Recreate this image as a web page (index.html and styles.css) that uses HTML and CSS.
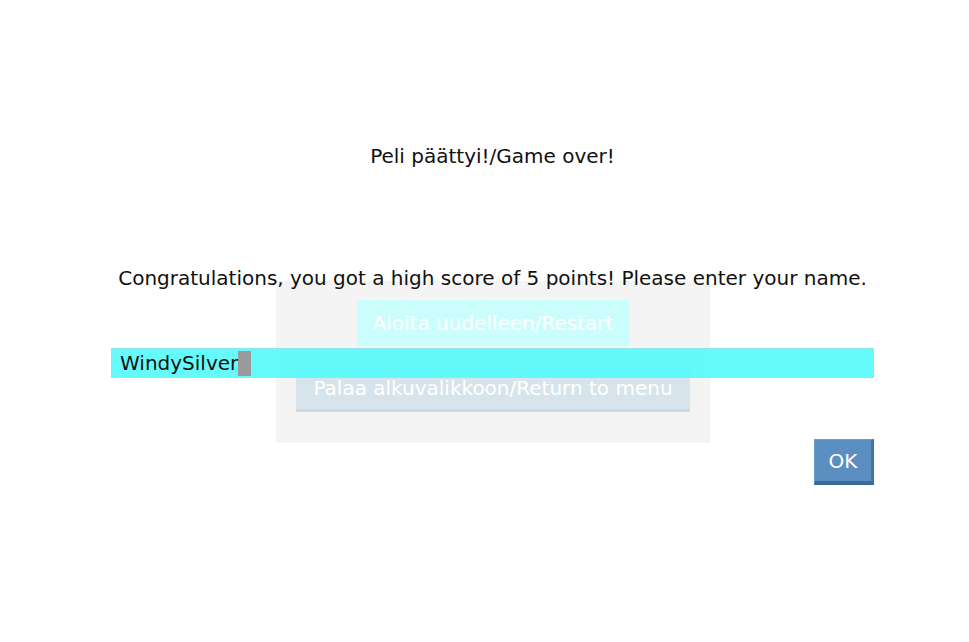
FILE: index.html
```html
<!DOCTYPE html>
<html lang="fi">
<head>
<meta charset="utf-8">
<title>Peli päättyi</title>
<link rel="stylesheet" href="styles.css">
</head>
<body>
<div class="stage">
  <div class="menu-panel">
    <button class="menu-btn restart">Aloita uudelleen/Restart</button>
    <button class="menu-btn back">Palaa alkuvalikkoon/Return to menu</button>
  </div>
  <div class="dialog">
    <h1 class="title">Peli päättyi!/Game over!</h1>
    <p class="message">Congratulations, you got a high score of 5 points! Please enter your name.</p>
    <div class="name-field"><span class="name-text">WindySilver</span><span class="caret"></span></div>
    <div class="actions"><button class="ok-btn">OK</button></div>
  </div>
</div>
</body>
</html>
```

FILE: styles.css
```css
html, body {
  margin: 0;
  padding: 0;
  background: #ffffff;
  font-family: "DejaVu Sans", "Liberation Sans", sans-serif;
}
.stage {
  position: relative;
  width: 969px;
  height: 642px;
  overflow: hidden;
}
.menu-panel {
  position: absolute;
  left: 276px;
  top: 281px;
  width: 434px;
  height: 162px;
  box-sizing: border-box;
  background: #f4f4f4;
  display: flex;
  flex-direction: column;
  align-items: center;
  padding-top: 19px;
  gap: 21px;
}
.menu-btn {
  border: none;
  color: #ffffff;
  font-family: inherit;
  font-size: 20px;
  padding: 0;
  margin: 0;
}
.restart {
  width: 272px;
  height: 46px;
  background: #ccfdfd;
}
.back {
  width: 394px;
  height: 45px;
  background: #d8e4ec;
  border-bottom: 3px solid #cdd8e2;
  box-sizing: border-box;
}
.dialog {
  position: absolute;
  inset: 0;
  padding-left: 16px;
  display: flex;
  flex-direction: column;
  align-items: center;
  color: #111111;
}
.title {
  margin: 144px 0 0;
  font-size: 20px;
  font-weight: normal;
  line-height: 24px;
}
.message {
  margin: 98px 0 0;
  font-size: 20px;
  line-height: 24px;
}
.name-field {
  margin-top: 58px;
  width: 763px;
  height: 30px;
  box-sizing: border-box;
  background: rgba(80, 250, 250, 0.88);
  border: 1px solid #8ee8ea;
  display: flex;
  align-items: center;
  padding-left: 8px;
}
.name-text {
  font-size: 20px;
}
.caret {
  width: 13px;
  height: 25px;
  background: #9a9a9a;
}
.actions {
  width: 763px;
  display: flex;
  justify-content: flex-end;
  margin-top: 61px;
}
.ok-btn {
  width: 60px;
  height: 46px;
  background: #5b8fc1;
  color: #ffffff;
  font-family: inherit;
  font-size: 20px;
  border-style: solid;
  border-width: 1px 3px 4px 1px;
  border-color: #6d9dcc #3f74a8 #3a6a9c #6d9dcc;
  box-sizing: border-box;
  padding: 0;
}
```
